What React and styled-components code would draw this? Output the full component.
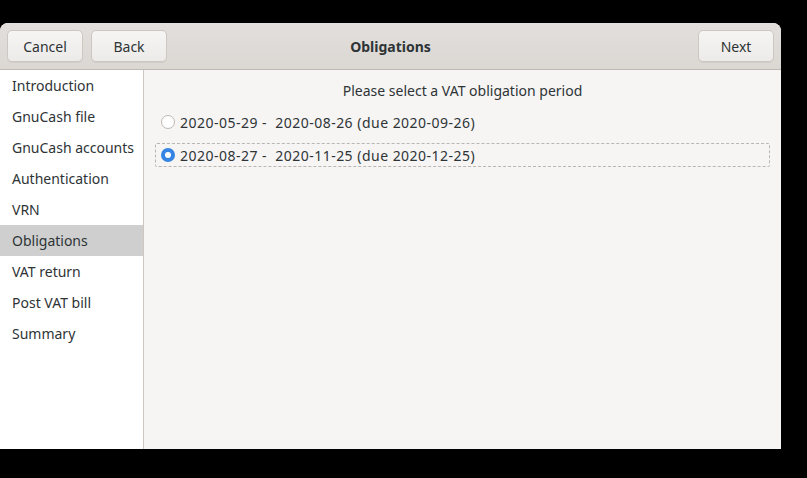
import React, {useState} from "react"
import styled, {createGlobalStyle} from "styled-components"

const GlobalStyle = createGlobalStyle`
    html, body {
        margin: 0;
        padding: 0;
        background: #000;
    }
    body {
        font-family: "Noto Sans", "DejaVu Sans", sans-serif;
        font-size: 14px;
        color: #2e3436;
    }
`

const Screen = styled.div`
    width: 807px;
    height: 478px;
    padding-top: 23px;
    box-sizing: border-box;
`

const Window = styled.div`
    width: 781px;
    height: 426px;
    display: flex;
    flex-direction: column;
    border-radius: 8px 8px 0 0;
    overflow: hidden;
    background: #f6f5f4;
`

const HeaderBar = styled.div`
    display: grid;
    grid-template-columns: 1fr auto 1fr;
    align-items: center;
    height: 47px;
    padding: 0 7px;
    box-sizing: border-box;
    background: linear-gradient(to bottom, #e2dfdc, #dbd7d3);
    border-bottom: 1px solid #c0bab4;
    flex-shrink: 0;
`

const ButtonGroup = styled.div`
    display: flex;
    gap: 8px;
    justify-content: ${p => (p.$end ? "flex-end" : "flex-start")};
`

const HeaderButton = styled.button`
    width: 76px;
    height: 32px;
    border: 1px solid #cdc7c2;
    border-radius: 5px;
    background: linear-gradient(to bottom, #f6f5f4, #edebe9);
    box-shadow: 0 1px 0 rgba(0, 0, 0, 0.05);
    font-family: inherit;
    font-size: 14px;
    color: #2e3436;
    padding: 0;
`

const Title = styled.div`
    font-weight: bold;
    font-size: 14px;
    color: #2e3436;
`

const Body = styled.div`
    flex: 1;
    display: flex;
`

const Sidebar = styled.div`
    width: 143px;
    background: #fff;
    border-right: 1px solid #cdc7c2;
    display: flex;
    flex-direction: column;
`

const Step = styled.div`
    height: 31px;
    display: flex;
    align-items: center;
    padding-left: 12px;
    background: ${p => (p.$active ? "#cfcfcf" : "transparent")};
    color: #2e3436;
`

const Content = styled.div`
    flex: 1;
    display: flex;
    flex-direction: column;
    padding: 11px 11px;
    gap: 9px;
`

const Prompt = styled.div`
    text-align: center;
    height: 19px;
    line-height: 19px;
    margin-bottom: 1px;
`

const Option = styled.label`
    display: flex;
    align-items: center;
    gap: 5px;
    height: 24px;
    padding-left: 5px;
    box-sizing: border-box;
    border: 1px dashed ${p => (p.$focused ? "#b9b6b3" : "transparent")};
    border-radius: 2px;
`

const OptionText = styled.span`
    white-space: pre;
    letter-spacing: 0.48px;
`

const Radio = styled.span`
    width: 14px;
    height: 14px;
    border-radius: 50%;
    box-sizing: border-box;
    flex-shrink: 0;
    border: ${p => (p.$checked ? "none" : "1px solid #bfb8b1")};
    background: ${p => (p.$checked ? "#3584e4" : "#fff")};
    display: flex;
    align-items: center;
    justify-content: center;

    &::after {
        content: "";
        display: ${p => (p.$checked ? "block" : "none")};
        width: 6px;
        height: 6px;
        border-radius: 50%;
        background: #fff;
    }
`

const steps = [
    "Introduction",
    "GnuCash file",
    "GnuCash accounts",
    "Authentication",
    "VRN",
    "Obligations",
    "VAT return",
    "Post VAT bill",
    "Summary",
]

const periods = [
    "2020-05-29 -  2020-08-26 (due 2020-09-26)",
    "2020-08-27 -  2020-11-25 (due 2020-12-25)",
]

const App = () => {
    const [selected, setSelected] = useState(1)

    return (
        <Screen>
            <GlobalStyle/>
            <Window>
                <HeaderBar>
                    <ButtonGroup>
                        <HeaderButton>Cancel</HeaderButton>
                        <HeaderButton>Back</HeaderButton>
                    </ButtonGroup>
                    <Title>Obligations</Title>
                    <ButtonGroup $end>
                        <HeaderButton>Next</HeaderButton>
                    </ButtonGroup>
                </HeaderBar>
                <Body>
                    <Sidebar>
                        {steps.map(step => (
                            <Step key={step} $active={step === "Obligations"}>{step}</Step>
                        ))}
                    </Sidebar>
                    <Content>
                        <Prompt>Please select a VAT obligation period</Prompt>
                        {periods.map((period, i) => (
                            <Option key={period} $focused={i === selected} onClick={() => setSelected(i)}>
                                <Radio $checked={i === selected}/>
                                <OptionText>{period}</OptionText>
                            </Option>
                        ))}
                    </Content>
                </Body>
            </Window>
        </Screen>
    )
}

export default App
